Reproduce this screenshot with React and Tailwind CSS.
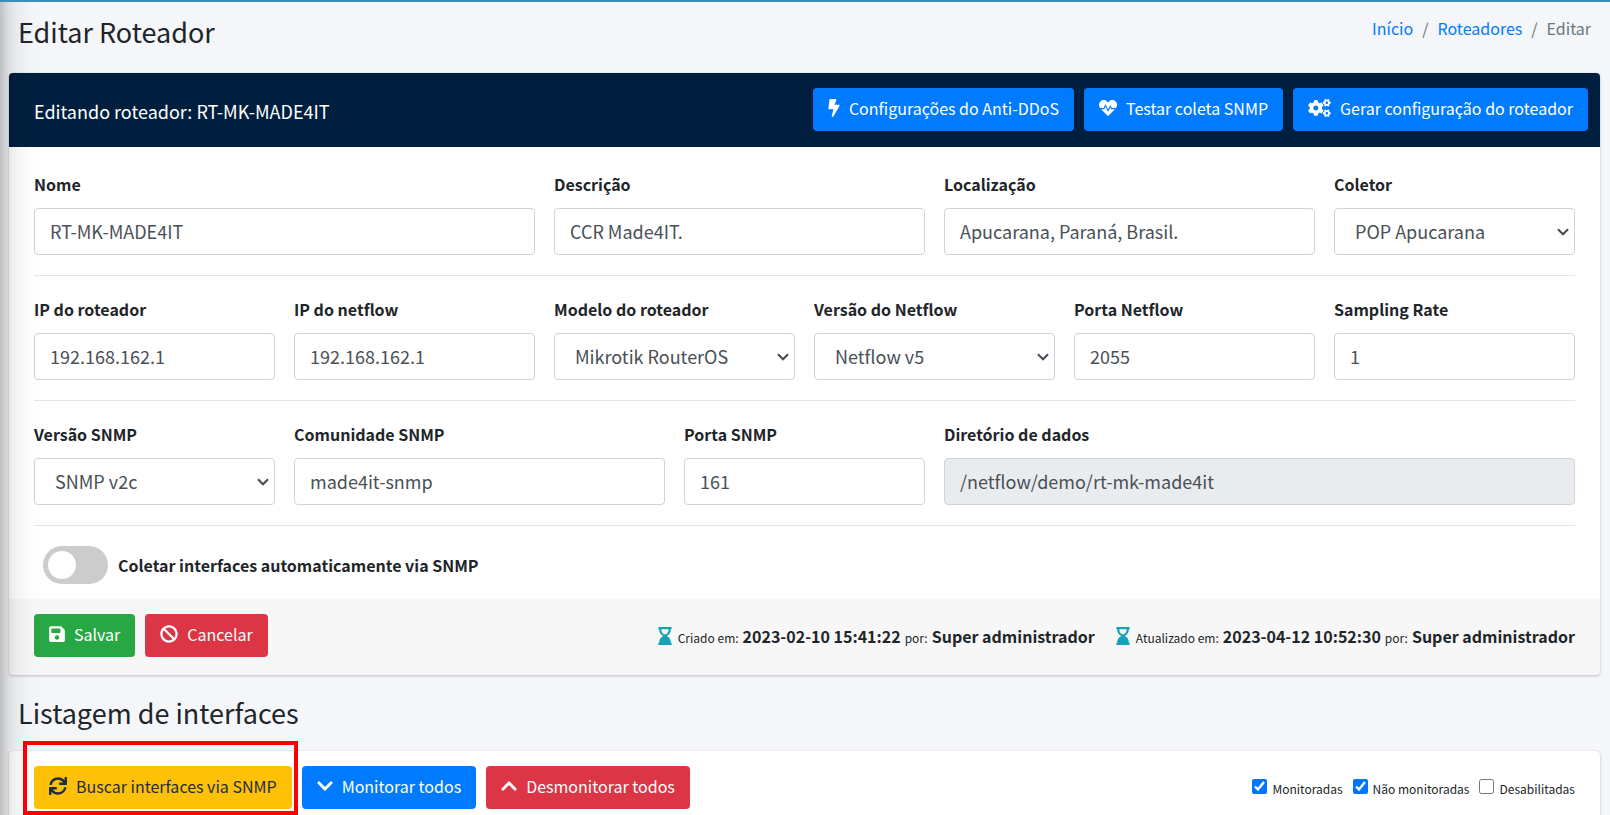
import {
  FaBolt,
  FaHeartbeat,
  FaCogs,
  FaSave,
  FaBan,
  FaSync,
  FaChevronDown,
  FaChevronUp,
  FaHourglassEnd,
} from 'react-icons/fa';

const colors = {
  primary: 'bg-[#007bff] text-white',
  success: 'bg-[#28a745] text-white',
  danger: 'bg-[#dc3545] text-white',
  warning: 'bg-[#ffc107] text-[#1f2d3d]',
};

function Button({ color, icon: Icon, iconWidth = 'w-4', children }) {
  return (
    <button
      type="button"
      className={`flex h-[43px] items-center gap-[9px] whitespace-nowrap rounded px-[15px] pb-[3px] text-base ${colors[color]}`}
    >
      <Icon className={`h-[18px] shrink-0 ${iconWidth}`} />
      {children}
    </button>
  );
}

function Field({ id, label, span, children }) {
  return (
    <div className={span}>
      <label htmlFor={id} className="block pb-3 text-base leading-6 font-bold">
        {label}
      </label>
      {children}
    </div>
  );
}

const control = 'h-[47px] w-full rounded border border-[#ced4da] pb-[2px] text-lg text-[#495057]';

function TextField({ id, label, span, value, disabled }) {
  return (
    <Field id={id} label={label} span={span}>
      <input
        id={id}
        type="text"
        defaultValue={value}
        disabled={disabled}
        className={`${control} px-[15px] ${disabled ? 'bg-[#e9ecef]' : 'bg-white'}`}
      />
    </Field>
  );
}

function SelectField({ id, label, span, value }) {
  return (
    <Field id={id} label={label} span={span}>
      <div className="relative">
        <select id={id} defaultValue={value} className={`${control} appearance-none bg-white px-5`}>
          <option>{value}</option>
        </select>
        <svg
          viewBox="0 0 12 8"
          className="pointer-events-none absolute top-5 right-[6px] h-2 w-3 text-[#495057]"
          fill="none"
          stroke="currentColor"
          strokeWidth="2.2"
        >
          <path d="M1 1.2 6 6.2 11 1.2" />
        </svg>
      </div>
    </Field>
  );
}

function Row({ children }) {
  return <div className="grid grid-cols-12 gap-x-[19px] border-b border-black/10 pt-[21px] pb-5">{children}</div>;
}

function Stamp({ label, date, user }) {
  return (
    <p className="flex items-baseline gap-1 whitespace-nowrap text-xs">
      <FaHourglassEnd className="mr-[2px] h-[18px] w-[14px] self-center text-[#17a2b8]" />
      {label} <b className="text-base">{date}</b> por: <b className="text-base">{user}</b>
    </p>
  );
}

function Check({ label, checked }) {
  return (
    <label className="flex items-baseline gap-[5px] text-xs">
      <input type="checkbox" defaultChecked={checked} className="size-[15px] accent-[#0075ff]" />
      {label}
    </label>
  );
}

export default function App() {
  return (
    <div className="relative min-h-screen overflow-hidden border-t-2 border-[#3c8dbc] bg-[#f4f6f9] pr-[10px] pl-[9px] font-['Noto_Sans_CJK_SC',sans-serif] text-[#212529]">
      <header className="flex items-start justify-between px-[9px] pt-[10px] pb-[21px]">
        <h1 className="text-[27px] leading-10">Editar Roteador</h1>
        <nav className="flex gap-[9px] pt-1 text-base leading-6 text-[#6c757d]">
          <a href="#" className="text-[#007bff]">Início</a>
          <span>/</span>
          <a href="#" className="text-[#007bff]">Roteadores</a>
          <span>/</span>
          <span>Editar</span>
        </nav>
      </header>

      <form className="overflow-hidden rounded bg-white shadow-[0_0_1px_rgba(0,0,0,0.13),0_1px_3px_rgba(0,0,0,0.2)]">
        <div className="flex items-start justify-between bg-[#001f3f] pt-[15px] pr-3 pb-4 pl-[25px]">
          <h2 className="pt-[9px] text-lg leading-7 text-white">Editando roteador: RT-MK-MADE4IT</h2>
          <div className="flex gap-[10px]">
            <Button color="primary" icon={FaBolt} iconWidth="w-3">Configurações do Anti-DDoS</Button>
            <Button color="primary" icon={FaHeartbeat} iconWidth="w-[18px]">Testar coleta SNMP</Button>
            <Button color="primary" icon={FaCogs} iconWidth="w-[23px]">Gerar configuração do roteador</Button>
          </div>
        </div>

        <div className="px-[25px] pt-1">
          <Row>
            <TextField id="nome" label="Nome" span="col-span-4" value="RT-MK-MADE4IT" />
            <TextField id="descricao" label="Descrição" span="col-span-3" value="CCR Made4IT." />
            <TextField id="localizacao" label="Localização" span="col-span-3" value="Apucarana, Paraná, Brasil." />
            <SelectField id="coletor" label="Coletor" span="col-span-2" value="POP Apucarana" />
          </Row>
          <Row>
            <TextField id="ip-roteador" label="IP do roteador" span="col-span-2" value="192.168.162.1" />
            <TextField id="ip-netflow" label="IP do netflow" span="col-span-2" value="192.168.162.1" />
            <SelectField id="modelo" label="Modelo do roteador" span="col-span-2" value="Mikrotik RouterOS" />
            <SelectField id="versao-netflow" label="Versão do Netflow" span="col-span-2" value="Netflow v5" />
            <TextField id="porta-netflow" label="Porta Netflow" span="col-span-2" value="2055" />
            <TextField id="sampling" label="Sampling Rate" span="col-span-2" value="1" />
          </Row>
          <Row>
            <SelectField id="versao-snmp" label="Versão SNMP" span="col-span-2" value="SNMP v2c" />
            <TextField id="comunidade" label="Comunidade SNMP" span="col-span-3" value="made4it-snmp" />
            <TextField id="porta-snmp" label="Porta SNMP" span="col-span-2" value="161" />
            <TextField id="diretorio" label="Diretório de dados" span="col-span-5" value="/netflow/demo/rt-mk-made4it" disabled />
          </Row>
          <label className="flex items-center gap-[10px] px-[9px] pt-5 pb-[15px] text-base font-bold">
            <input
              type="checkbox"
              role="switch"
              className="h-[38px] w-[65px] appearance-none rounded-full bg-[#ccc] p-[5px] before:block before:size-7 before:rounded-full before:bg-white checked:bg-[#2196f3] checked:before:translate-x-7"
            />
            Coletar interfaces automaticamente via SNMP
          </label>
        </div>

        <div className="flex items-start justify-between bg-black/3 px-[25px] pt-[15px] pb-[18px]">
          <div className="flex gap-[10px]">
            <Button color="success" icon={FaSave}>Salvar</Button>
            <Button color="danger" icon={FaBan} iconWidth="w-[18px]">Cancelar</Button>
          </div>
          <div className="flex gap-[21px] pt-[10px]">
            <Stamp label="Criado em:" date="2023-02-10 15:41:22" user="Super administrador" />
            <Stamp label="Atualizado em:" date="2023-04-12 10:52:30" user="Super administrador" />
          </div>
        </div>
      </form>

      <h1 className="px-[9px] pt-[18px] pb-[18px] text-[27px] leading-10">Listagem de interfaces</h1>

      <section className="rounded-t bg-white px-[25px] py-[15px] shadow-[0_0_1px_rgba(0,0,0,0.13),0_1px_3px_rgba(0,0,0,0.2)]">
        <div className="flex items-center justify-between">
          <div className="flex gap-[10px]">
            <div className="relative">
              <Button color="warning" icon={FaSync} iconWidth="w-[18px]">Buscar interfaces via SNMP</Button>
              <div className="pointer-events-none absolute -top-[25px] -right-[6px] -bottom-[6px] -left-[11px] border-4 border-[#ff0000]" />
            </div>
            <Button color="primary" icon={FaChevronDown}>Monitorar todos</Button>
            <Button color="danger" icon={FaChevronUp}>Desmonitorar todos</Button>
          </div>
          <div className="flex gap-[10px]">
            <Check label="Monitoradas" checked />
            <Check label="Não monitoradas" checked />
            <Check label="Desabilitadas" />
          </div>
        </div>
      </section>

      {/* sidebar edge, only its shadow reaches the page */}
      <div className="pointer-events-none absolute -top-10 -bottom-10 -left-[250px] w-[250px] shadow-[0_14px_36px_rgba(0,0,0,0.25),0_10px_13px_rgba(0,0,0,0.22)]" />
    </div>
  );
}
